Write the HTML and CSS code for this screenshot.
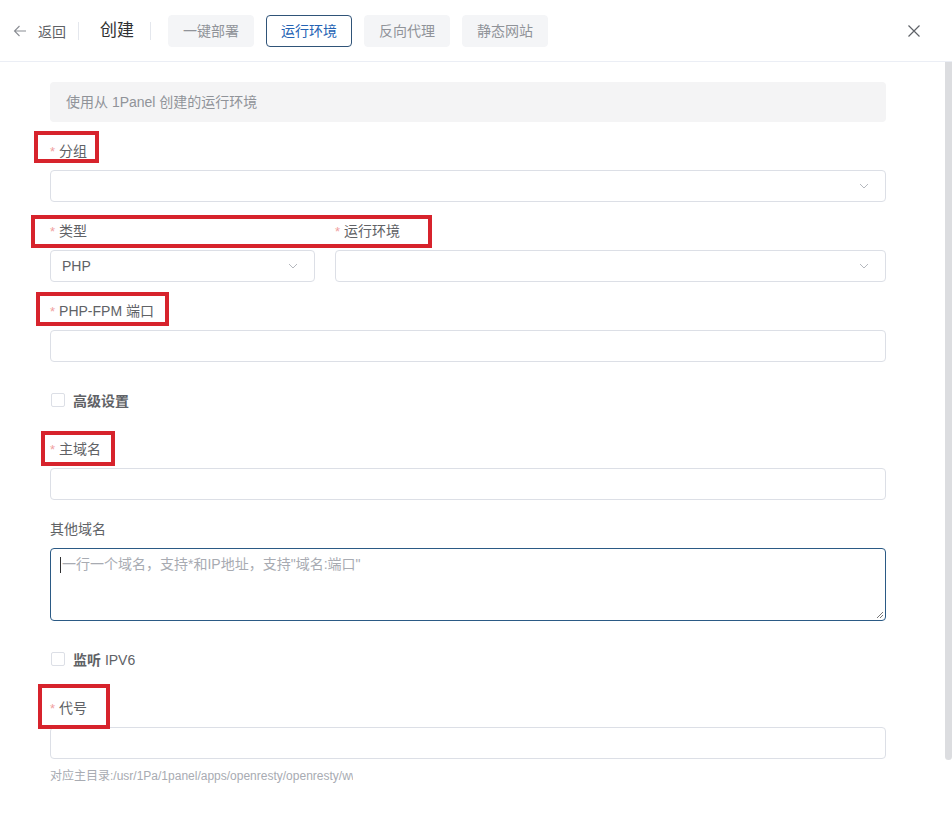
FILE: index.html
```html
<!DOCTYPE html>
<html lang="zh-CN">
<head>
<meta charset="utf-8">
<title>创建</title>
<link rel="stylesheet" href="styles.css">
</head>
<body>
<div class="drawer">
  <header class="header">
    <div class="back">
      <svg class="back-icon" width="14" height="14" viewBox="0 0 14 14"><path d="M13 7H1.5M6.5 2 1.5 7l5 5" fill="none" stroke="#8a8d93" stroke-width="1.1"/></svg>
      <span>返回</span>
    </div>
    <span class="divider d1"></span>
    <span class="title">创建</span>
    <span class="divider d2"></span>
    <nav class="tabs">
      <span class="tab">一键部署</span>
      <span class="tab active">运行环境</span>
      <span class="tab">反向代理</span>
      <span class="tab">静态网站</span>
    </nav>
    <svg class="close" width="14" height="14" viewBox="0 0 14 14"><path d="M1.5 1.5l11 11M12.5 1.5l-11 11" stroke="#5f6268" stroke-width="1.2" fill="none"/></svg>
  </header>
  <main class="body">
    <form class="form">
      <div class="alert">使用从 1Panel 创建的运行环境</div>

      <div class="item">
        <label class="label req">分组</label>
        <div class="input select"><span class="value"></span><svg class="arrow" width="12" height="12" viewBox="0 0 12 12"><path d="M2 4l4 4 4-4" fill="none" stroke="#b5b8be" stroke-width="1"/></svg></div>
        <span class="mark mark-group"></span>
      </div>

      <div class="item row">
        <div class="col col-8">
          <label class="label req">类型</label>
          <div class="input select"><span class="value">PHP</span><svg class="arrow" width="12" height="12" viewBox="0 0 12 12"><path d="M2 4l4 4 4-4" fill="none" stroke="#b5b8be" stroke-width="1"/></svg></div>
        </div>
        <div class="col col-16">
          <label class="label req">运行环境</label>
          <div class="input select"><span class="value"></span><svg class="arrow" width="12" height="12" viewBox="0 0 12 12"><path d="M2 4l4 4 4-4" fill="none" stroke="#b5b8be" stroke-width="1"/></svg></div>
        </div>
        <span class="mark mark-type"></span>
      </div>

      <div class="item">
        <label class="label req">PHP-FPM 端口</label>
        <div class="input"></div>
        <span class="mark mark-port"></span>
      </div>

      <div class="item check-item">
        <span class="checkbox"></span><span class="check-label">高级设置</span>
      </div>

      <div class="item">
        <label class="label req">主域名</label>
        <div class="input"></div>
        <span class="mark mark-domain"></span>
      </div>

      <div class="item">
        <label class="label">其他域名</label>
        <div class="textarea"><span class="caret"></span><span class="placeholder">一行一个域名，支持*和IP地址，支持"域名:端口"</span>
          <svg class="resize" width="8" height="8" viewBox="0 0 8 8"><path d="M7 1 1 7M7 4 4 7" stroke="#777" stroke-width="1" fill="none"/></svg>
        </div>
      </div>

      <div class="item check-item">
        <span class="checkbox"></span><span class="check-label">监听 <span class="latin">IPV6</span></span>
      </div>

      <div class="item last">
        <label class="label req">代号</label>
        <div class="input"></div>
        <div class="hint">对应主目录:/usr/1Pa/1panel/apps/openresty/openresty/www</div>
        <span class="mark mark-alias"></span>
      </div>
    </form>
  </main>
  <div class="scroll-thumb"></div>
</div>
</body>
</html>
```

FILE: styles.css
```css
* { box-sizing: border-box; }
html, body { margin: 0; padding: 0; background: #fff; }
body {
  font-family: "Liberation Sans", "Noto Sans CJK SC", sans-serif;
  font-size: 14px;
  color: #606266;
  width: 952px;
  height: 815px;
  overflow: hidden;
}
.drawer { position: relative; display: flex; flex-direction: column; height: 815px; }

.header {
  height: 62px;
  flex: none;
  display: flex;
  align-items: center;
  padding: 0 0 0 13px;
  border-bottom: 1px solid #ebeef5;
}
.back { display: flex; align-items: center; gap: 11px; color: #606266; font-size: 14px; }
.back-icon { display: block; }
.divider { width: 1px; height: 18px; background: #e4e7ed; }
.d1 { margin: 0 21px 0 12px; }
.d2 { margin: 0 17px 0 16px; }
.title { font-size: 17px; color: #303133; position: relative; top: -2px; }
.tabs { display: flex; gap: 12px; }
.tab {
  height: 32px;
  line-height: 30px;
  padding: 0 14px;
  border: 1px solid #f4f5f7;
  border-radius: 4px;
  background: #f4f5f7;
  color: #909399;
  font-size: 14px;
}
.tab.active { background: #fff; border-color: #2f5378; color: #2563b4; }
.close { margin-left: auto; margin-right: 31px; display: block; }

.body {
  flex: 1;
  min-height: 0;
  overflow: hidden;
}

.scroll-thumb {
  position: absolute;
  right: 0;
  top: 62px;
  width: 7px;
  height: 698px;
  background: #dcdde0;
  border-radius: 0 0 4px 4px;
}

.form { width: 836px; margin-left: 50px; padding: 20px 0 55px; }

.alert {
  height: 40px;
  line-height: 40px;
  background: #f4f4f5;
  border-radius: 4px;
  padding: 0 16px;
  color: #909399;
  font-size: 14px;
  margin-bottom: 18px;
}

.item { position: relative; margin-bottom: 18px; }
.item.last { margin-bottom: 0; }
.row { display: flex; gap: 20px; }
.col-8 { width: 265px; flex: none; }
.col-16 { flex: 1; }

.label {
  display: block;
  line-height: 22px;
  height: 22px;
  margin-bottom: 8px;
  font-size: 14px;
  color: #606266;
}
.label.req::before { content: "*"; color: #f0a0a0; margin-right: 4px; font-size: 13px; }

.input {
  height: 32px;
  border: 1px solid #dcdfe6;
  border-radius: 4px;
  background: #fff;
  display: flex;
  align-items: center;
  padding: 0 11px;
}
.select .value { flex: 1; color: #606266; font-size: 14px; }
.select .arrow { display: block; margin-right: 4px; }

.check-item { height: 40px; display: flex; align-items: center; }
.checkbox {
  width: 14px;
  height: 14px;
  border: 1px solid #dcdfe6;
  border-radius: 2px;
  margin-left: 1px;
  margin-right: 8px;
}
.check-label { font-weight: 600; color: #606266; }
.check-label .latin { font-weight: 400; }

.textarea {
  position: relative;
  height: 73px;
  border: 1px solid #2b5a85;
  border-radius: 4px;
  padding: 5px 11px 5px 9px;
  line-height: 21px;
  color: #a8abb2;
  display: flex;
  align-items: flex-start;
}
.caret { width: 1px; height: 16px; background: #303133; margin-top: 3px; margin-right: 1px; flex: none; }
.placeholder { color: #a8abb2; }
.resize { position: absolute; right: 1px; bottom: 1px; }

.hint {
  width: 303px;
  overflow: hidden;
  white-space: nowrap;
  font-size: 12px;
  line-height: 18px;
  margin-top: 8px;
  color: #a8abb2;
}

/* annotation boxes */
.mark { position: absolute; border: 4px solid #d7232c; pointer-events: none; }
.mark-group { left: -16px; top: -9px; width: 65px; height: 32px; }
.mark-type { left: -19px; top: -5px; width: 401px; height: 33px; }
.mark-port { left: -14px; top: -8px; width: 133px; height: 34px; }
.mark-domain { left: -9px; top: -7px; width: 74px; height: 35px; }
.mark-alias { left: -12px; top: -13px; width: 72px; height: 45px; }
```
